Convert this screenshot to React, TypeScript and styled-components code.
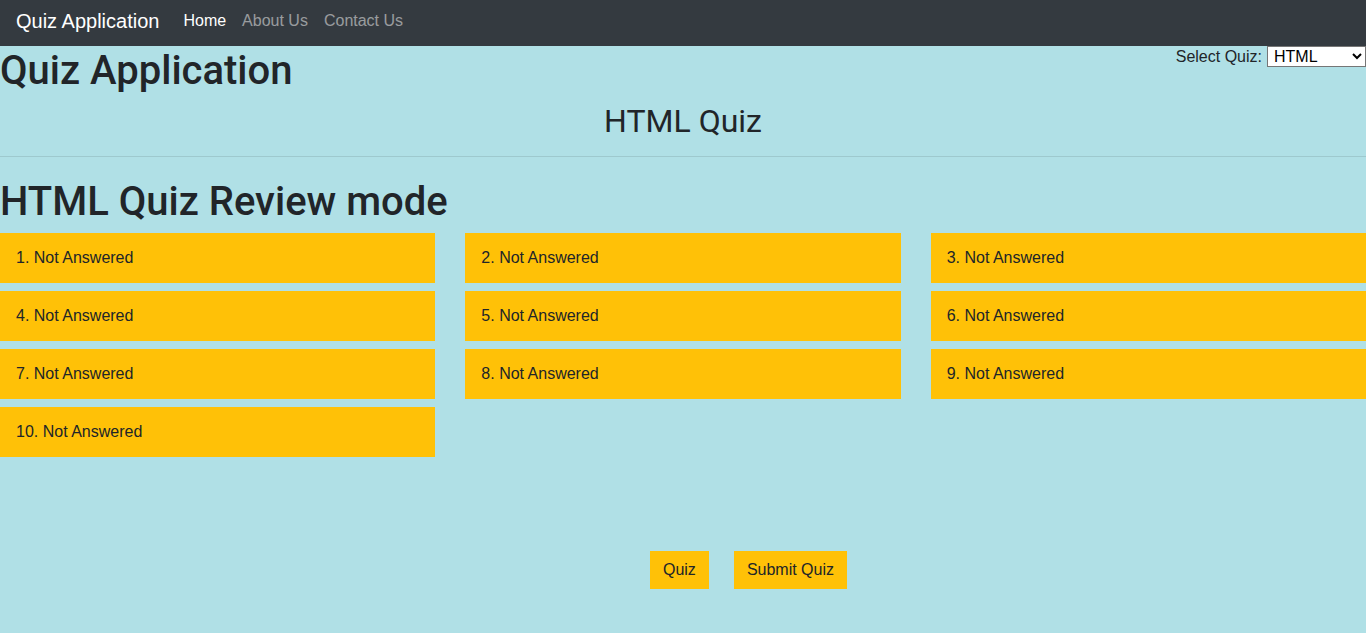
import React from "react";
import styled, { createGlobalStyle } from "styled-components";

const Global = createGlobalStyle`
  html, body { margin: 0; padding: 0; }
  body {
    background: #b0e0e6;
    color: #212529;
    font-family: "Liberation Sans", Arial, sans-serif;
    font-size: 16px;
  }
  * { box-sizing: border-box; }
`;

const NavBar = styled.nav`
  height: 46px;
  background: #343a40;
  display: flex;
  align-items: center;
  padding: 0 16px 4px;
`;

const Brand = styled.span`
  color: #fff;
  font-size: 20px;
  margin-right: 24px;
`;

const NavLink = styled.a<{ $active?: boolean }>`
  color: ${(p) => (p.$active ? "#fff" : "rgba(255,255,255,0.5)")};
  text-decoration: none;
  font-size: 16px;
  margin-right: 16px;
`;

const HeaderRow = styled.div`
  display: flex;
  justify-content: space-between;
  align-items: flex-start;
`;

const Title = styled.h1`
  font-family: Roboto, "Liberation Sans", sans-serif;
  font-weight: 500;
  font-size: 40px;
  line-height: 1.2;
  margin: 1px 0 7px;
`;

const SelectWrap = styled.label`
  display: flex;
  align-items: center;
  gap: 5px;
  font-size: 16px;
`;

const Select = styled.select`
  font-family: "Liberation Sans", Arial, sans-serif;
  font-size: 16px;
  width: 99px;
  height: 21px;
  padding: 0 2px;
  border: 1px solid #767676;
  background: #fff;
  color: #000;
`;

const SubTitle = styled.h2`
  font-family: Roboto, "Liberation Sans", sans-serif;
  font-weight: 400;
  font-size: 32px;
  line-height: 1.2;
  text-align: center;
  margin: 0;
  padding-bottom: 16px;
`;

const Rule = styled.hr`
  border: 0;
  border-top: 1px solid rgba(0, 0, 0, 0.1);
  margin: 0 0 21px;
`;

const ReviewTitle = styled.h1`
  font-family: Roboto, "Liberation Sans", sans-serif;
  font-weight: 500;
  font-size: 40px;
  line-height: 1.2;
  margin: 0 0 7px;
`;

const Grid = styled.div`
  display: grid;
  grid-template-columns: repeat(3, 1fr);
  column-gap: 30px;
  row-gap: 8px;
`;

const Item = styled.div`
  background: #ffc107;
  height: 50px;
  display: flex;
  align-items: center;
  padding-left: 16px;
  font-size: 16px;
`;

const Actions = styled.div`
  display: flex;
  justify-content: center;
  gap: 25px;
  margin-top: 94px;
  padding-left: 131px;
`;

const Button = styled.button`
  background: #ffc107;
  border: 0;
  height: 38px;
  padding: 0 13px;
  font-family: "Liberation Sans", Arial, sans-serif;
  font-size: 16px;
  color: #212529;
`;

export default function App() {
  const items = Array.from({ length: 10 }, (_, i) => i + 1);
  return (
    <>
      <Global />
      <NavBar>
        <Brand>Quiz Application</Brand>
        <NavLink $active href="#">Home</NavLink>
        <NavLink href="#">About Us</NavLink>
        <NavLink href="#">Contact Us</NavLink>
      </NavBar>
      <HeaderRow>
        <Title>Quiz Application</Title>
        <SelectWrap>
          Select Quiz:
          <Select defaultValue="HTML">
            <option>HTML</option>
            <option>CSS</option>
            <option>JavaScript</option>
          </Select>
        </SelectWrap>
      </HeaderRow>
      <SubTitle>HTML Quiz</SubTitle>
      <Rule />
      <ReviewTitle>HTML Quiz Review mode</ReviewTitle>
      <Grid>
        {items.map((n) => (
          <Item key={n}>{n}. Not Answered</Item>
        ))}
      </Grid>
      <Actions>
        <Button>Quiz</Button>
        <Button>Submit Quiz</Button>
      </Actions>
    </>
  );
}
